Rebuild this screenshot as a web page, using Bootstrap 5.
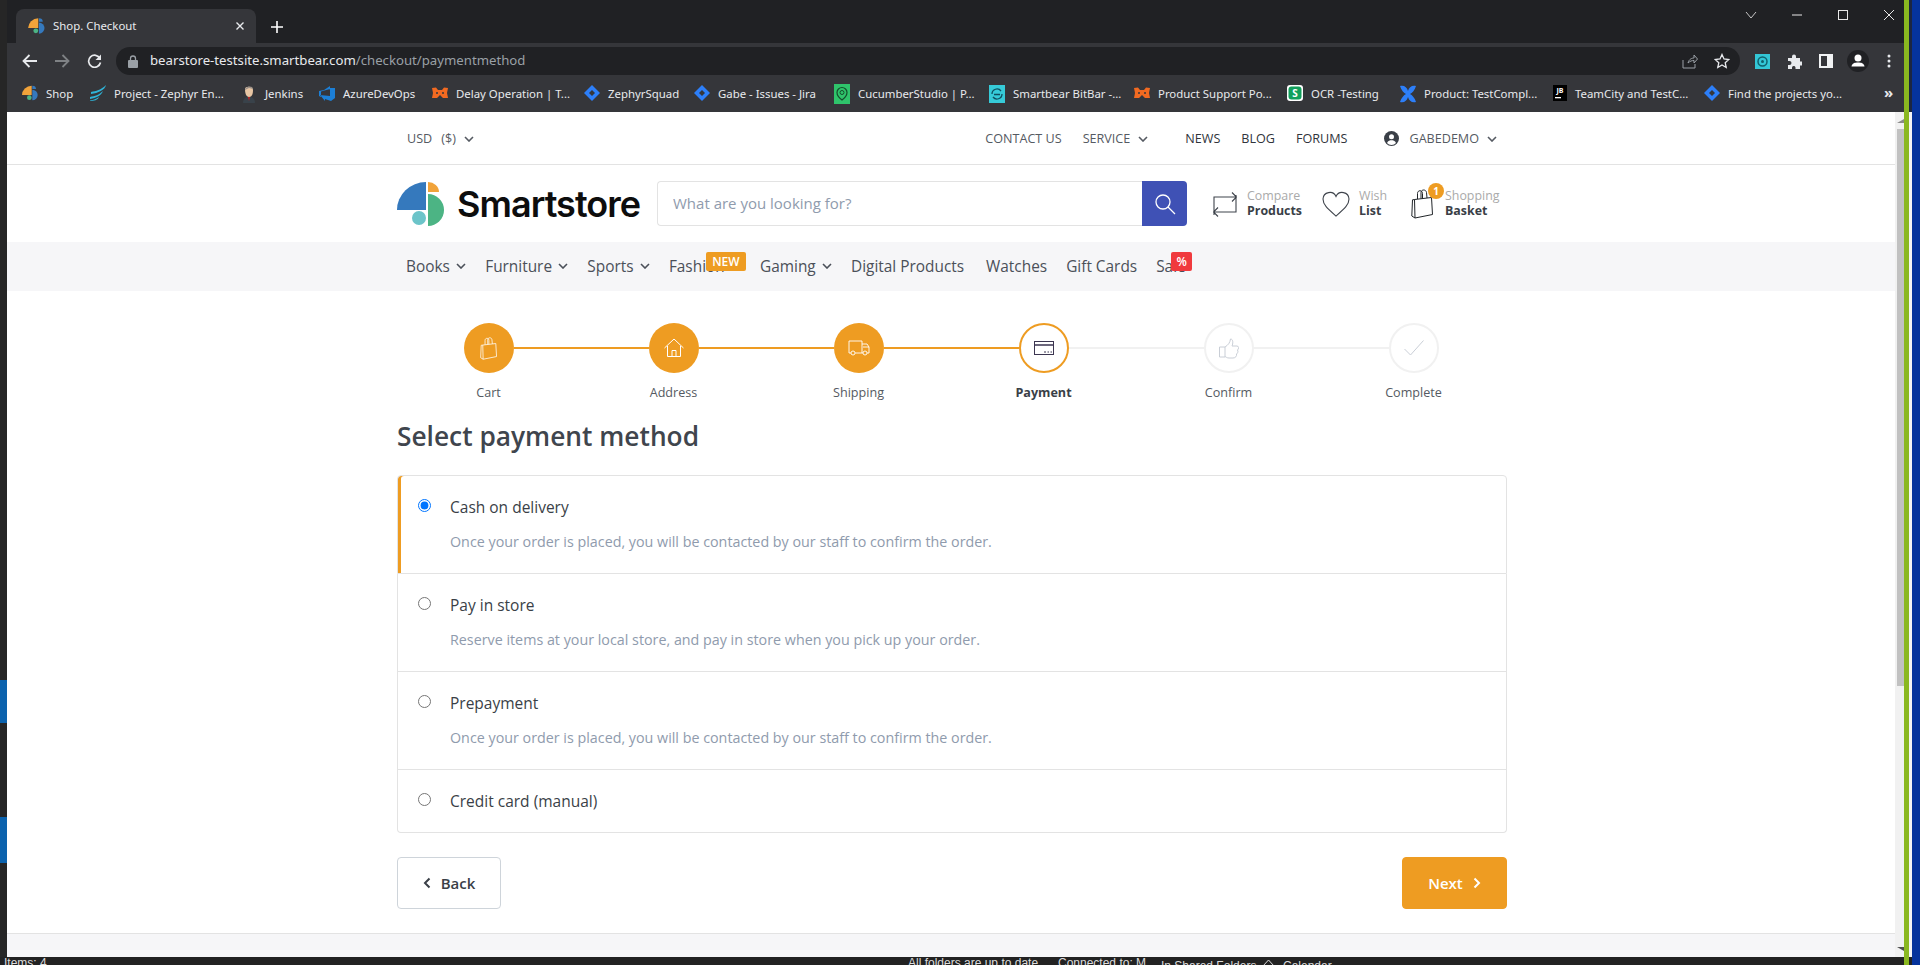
<!DOCTYPE html>
<html lang="en">
<head>
  <meta charset="UTF-8">
  <title>Shop. Checkout</title>
  <meta name="viewport" content="width=device-width, initial-scale=1">
  <link href="https://cdn.jsdelivr.net/npm/bootstrap@5.3.0/dist/css/bootstrap.min.css" rel="stylesheet">
  <script src="https://cdn.jsdelivr.net/npm/bootstrap@5.3.0/dist/js/bootstrap.bundle.min.js"></script>
  <style>
    html, body { height: 965px; overflow: hidden; }
    body {
      font-family: "Open Sans", "Noto Sans", sans-serif;
      font-size: 14px;
      color: #3a3f47;
      background: #05339c;
      display: flex;
      width: 1920px;
    }
    svg { display: block; flex: none; }

    /* desktop around the browser window */
    .desk-main { width: 1904px; flex: none; display: flex; flex-direction: column; }
    .desk-row { height: 957px; display: flex; }
    .desk-left {
      width: 7px; flex: none;
      background: linear-gradient(to bottom, #262626 680px, #0b62ad 680px 723px, #262626 723px 817px, #0b62ad 817px 863px, #262626 863px);
    }
    .desk-status {
      height: 8px; background: #222; color: #ddd; overflow: hidden;
      font-family: "Liberation Sans", sans-serif; font-size: 12px; line-height: 13px;
      display: flex; white-space: nowrap;
    }
    .st-a { margin-left: 4px; width: 904px; }
    .st-b { width: 150px; }
    .st-b2 { width: 103px; }
    .st-c { width: 102px; margin-top: 3px; }
    .st-d { width: 120px; margin-top: 3px; display: flex; gap: 9px; }
    .desk-green { width: 5px; flex: none; background: #8ab820; }
    .desk-strip { width: 3px; flex: none; display: flex; flex-direction: column; }
    .strip-top { height: 112px; background: #1c2640; }
    .strip-mid { flex: 1; background: #f4f4f4; }
    .strip-bot { height: 8px; background: #222; }
    .desk-blue { flex: 1; }

    /* browser chrome */
    .win { flex: 1; display: flex; flex-direction: column; min-width: 0; }
    .tabstrip { height: 43px; background: #202124; display: flex; align-items: flex-end; padding-left: 9px; }
    .tab-item {
      width: 240px; height: 34px; background: #35363a; border-radius: 8px 8px 0 0;
      display: flex; align-items: center; padding-left: 12px; color: #e8eaed;
      font-family: "Noto Sans", sans-serif; font-size: 11.4px;
    }
    .tab-title { margin-left: 8px; flex: 1; }
    .tab-x { margin-right: 12px; }
    .tab-plus { margin: 0 0 10px 15px; }
    .win-ctl { margin-left: auto; display: flex; align-items: center; gap: 34px; height: 30px; align-self: flex-start; padding-right: 9px; }

    .toolbar { height: 32px; background: #35363a; display: flex; padding-left: 7px; }
    .tool-slot { width: 32px; height: 28px; margin-top: 4px; display: flex; align-items: center; justify-content: center; }
    .omni {
      flex: 1; margin: 4px 6px 0; height: 28px; border-radius: 14px; background: #202124;
      display: flex; align-items: center; padding: 0 8px 0 12px; color: #e8eaed;
      font-family: "Noto Sans", sans-serif; font-size: 13.2px;
    }
    .omni-url { margin-left: 12px; flex: 1; }
    .omni-url span { color: #9aa0a6; }
    .omni-act { display: flex; gap: 16px; margin-right: 2px; }
    .tool-end { width: 30px; }

    .bmbar {
      height: 37px; background: #35363a; padding-left: 15px; color: #e8eaed;
      font-family: "Noto Sans", sans-serif; font-size: 11.4px;
      display: grid; align-items: center;
      grid-template-columns: 68px 151px 78px 113px 152px 110px 140px 155px 145px 153px 113px 153px 151px 170px 1fr;
    }
    .bm-item { display: flex; align-items: center; gap: 8px; white-space: nowrap; }
    .bm-more { color: #e8eaed; font-size: 15px; font-weight: 700; line-height: 1; margin-top: -3px; padding-left: 10px; }

    /* page */
    .viewport { flex: 1; display: flex; min-height: 0; }
    .page { flex: 1; background: #fff; display: flex; flex-direction: column; min-width: 0; }
    .scroll-track { width: 9px; flex: none; background: #f1f1f1; display: flex; flex-direction: column; justify-content: space-between; padding-left: 2px; }
    .scroll-up { height: 17px; display: flex; align-items: center; justify-content: flex-end; }
    .scroll-down { height: 17px; display: flex; align-items: center; justify-content: flex-end; margin-top: auto; }
    .scroll-thumb { height: 557px; background: #c1c1c1; }
    .shell { width: 1110px; margin: 0 0 0 390px; }

    .topbar { height: 53px; border-bottom: 1px solid #e3e3e3; font-size: 12.6px; }
    .topbar .shell { height: 100%; display: flex; align-items: center; padding: 2px 0 0 10px; color: #555a62; }
    .cur-gap { margin-left: 9px; }
    .chev { margin-left: 8px; }
    .top-right { margin-left: auto; display: flex; align-items: center; padding-right: 10px; }
    .top-right a { color: inherit; text-decoration: none; }
    .top-strong { color: #30343b !important; }
    .gap-21 { margin-left: 21px; }
    .gap-37 { margin-left: 37px; }
    .gap-10 { margin-left: 10px; }
    .gap-8 { margin-left: 8px; }

    .headrow { height: 77px; }
    .headrow .shell { height: 100%; display: flex; align-items: center; }
    .brand { display: flex; align-items: center; width: 260px; flex: none; }
    .brand-name {
      font-family: "Inter", sans-serif; font-weight: 600; font-size: 36px; letter-spacing: -.95px;
      color: #0d0d0d; margin-left: 12px; line-height: 1;
    }
    .searchbox { width: 530px; height: 45px; display: flex; flex: none; }
    .searchbox .form-control {
      border-radius: 4px 0 0 4px; border: 1px solid #e3e3e3; border-right: 0; font-size: 15px; padding-left: 15px; color: #8f9bad;
    }
    .searchbox .form-control::placeholder { color: #8f9bad; }
    .search-go { width: 45px; flex: none; background: #3f51b5; border-radius: 0 4px 4px 0; display: flex; align-items: center; justify-content: center; }
    .tool-link { display: flex; align-items: center; line-height: 14.5px; font-size: 12.4px; }
    .tool-link small { display: block; font-size: 12.4px; color: #aaa; }
    .tool-link b { display: block; font-weight: 700; color: #3a3f47; }
    .tl-cmp { margin-left: 26px; width: 109px; gap: 10px; }
    .tl-wish { width: 89px; gap: 9px; }
    .tl-bag { gap: 12px; position: relative; }
    .cart-count {
      position: absolute; left: 17px; top: -6px; width: 16px; height: 16px; border-radius: 50%;
      background: #ee9c22; color: #fff; font-size: 10px; font-weight: 700; line-height: 16px; text-align: center;
    }

    .catnav { height: 49px; background: #f6f6f8; }
    .catnav .shell { height: 100%; display: flex; align-items: center; padding-left: 9px; gap: 19px; font-size: 15.4px; font-weight: 500; color: #4b5059; }
    .catnav .chev { margin-left: 6.3px; }
    .cat-item { display: flex; align-items: center; position: relative; white-space: nowrap; }
    .cat-wide { margin-right: 3px; }
    .cat-tag {
      position: absolute; top: -3px; height: 19px; border-radius: 2px; color: #fff; font-size: 12px;
      font-weight: 600; line-height: 19px; text-align: center;
    }
    .tag-new { left: 37px; width: 40px; background: #ee9c22; }
    .tag-sale { left: 15px; width: 21px; background: #f03a3e; }

    .stepper { display: grid; grid-template-columns: repeat(6, 185px); margin: 32px 0 0 -1px; }
    .step-item { text-align: center; }
    .step-head { display: flex; align-items: center; }
    .step-head::before, .step-head::after { content: ""; flex: 1; height: 2px; }
    .ln-l-on::before, .ln-r-on::after { background: #ee9c22; }
    .ln-l-off::before, .ln-r-off::after { background: #f1f1f1; }
    .ln-l-none::before, .ln-r-none::after { background: transparent; }
    .step-dot { width: 50px; height: 50px; border-radius: 50%; display: flex; align-items: center; justify-content: center; }
    .dot-done { background: #ee9c22; }
    .dot-now { border: 2px solid #ee9c22; }
    .dot-off { border: 2px solid #f1f1f1; }
    .step-label { font-size: 12.6px; margin-top: 10px; line-height: 20px; color: #555a62; }
    .step-label-now { font-weight: 700; color: #3a3f47; }

    .page-title { font-family: "Open Sans", sans-serif; font-size: 26.3px; font-weight: 600; color: #40454d; margin: 8px 0 14px; height: 50px; line-height: 50px; }
    .pay-list { border-radius: 4px; }
    .pay-list .list-group-item { border-color: #e3e3e3; padding: 20px 17px 21px 20px; }
    .pay-on { box-shadow: inset 3px 0 0 #ee9c22; }
    .pay-head { display: flex; align-items: center; height: 21px; }
    .pay-head input { margin: 0 19px 2px 0; width: 13px; height: 13px; }
    .pay-name { font-weight: 500; font-size: 15.5px; color: #3a3f47; margin-top: 2px; }
    .pay-desc { margin: 14px 0 0 32px; color: #8f9bad; line-height: 21px; font-size: 14.3px; }

    .act-row { display: flex; justify-content: space-between; margin-top: 24px; }
    .btn-back, .btn-next { height: 52px; display: flex; align-items: center; gap: 10px; font-size: 15px; font-weight: 600; border-radius: 4px; justify-content: center; }
    .btn-back { width: 104px; background: #fff; border: 1px solid #ced4da; color: #3a3f47; }
    .btn-next { width: 105px; background: #ee9c22; border: 1px solid #ee9c22; color: #fff; }
    .foot-strip { flex: 1; margin-top: 24px; background: #f6f6f8; border-top: 1px solid #e3e3e3; }
  </style>
</head>
<body>

<svg width="0" height="0" class="position-absolute">
  <defs>
    <symbol id="logoMark" viewBox="0 0 48 46">
      <path d="M29 1V29H0A29 28 0 0 1 29 1Z" fill="#3579bd"/>
      <path d="M31 1A11 10 0 0 1 42 11H31Z" fill="#f1a33a"/>
      <path d="M31 13A16 16 0 0 1 31 45Z" fill="#4cb484"/>
      <circle cx="22" cy="37" r="7" fill="#6cc4c9"/>
    </symbol>
    <symbol id="favMark" viewBox="0 0 48 46">
      <path d="M29 1V29H0A29 28 0 0 1 29 1Z" fill="#f1a33a"/>
      <path d="M31 1A11 10 0 0 1 42 11H31Z" fill="#3579bd"/>
      <path d="M31 13A16 16 0 0 1 31 45Z" fill="#3579bd"/>
      <circle cx="22" cy="37" r="7" fill="#4cb484"/>
    </symbol>
    <symbol id="bearMask" viewBox="0 0 16 16">
      <path d="M0 3L4 2.500L6 5H10L12 2.500L16 3L15 8L16 13H11L8 10L5 13H0L1 8Z" fill="#f26a21"/>
      <circle cx="5" cy="8" r="1" fill="#35363a"/><circle cx="11" cy="8" r="1" fill="#35363a"/>
    </symbol>
    <symbol id="jiraMark" viewBox="0 0 16 16">
      <path d="M8 0L16 8L8 16L0 8Z" fill="#2d7ff9"/>
      <path d="M8 5L11 8L8 11L5 8Z" fill="#35363a"/>
    </symbol>
    <symbol id="chevDown" viewBox="0 0 10 6">
      <path d="M1 1L5 5L9 1" fill="none" stroke="currentColor" stroke-width="1.6"/>
    </symbol>
    <symbol id="bagLine" viewBox="0 0 22 30">
      <path d="M3.500 10.500L20.500 8.500L21.500 25.500L4 29L.8 27L1.500 10.800L3.500 10.500L4 29M6.500 10V4.500C6.500 .8 11.500 .8 11.500 4.500V9.500M10 9.500V3.800C10 .2 15 0 15.500 3.500L16 9" fill="none" stroke="currentColor" stroke-width="1"/>
    </symbol>
  </defs>
</svg>

<div class="desk-main">
  <div class="desk-row">
    <div class="desk-left"></div>
    <div class="win">

      <div class="tabstrip">
        <div class="tab-item">
          <svg width="17" height="16"><use href="#favMark"/></svg>
          <span class="tab-title">Shop. Checkout</span>
          <svg class="tab-x" width="8" height="8" viewBox="0 0 8 8"><path d="M.5.5L7.5 7.5M7.5.5L.5 7.5" stroke="#e8eaed" stroke-width="1.4"/></svg>
        </div>
        <svg class="tab-plus" width="12" height="12" viewBox="0 0 12 12"><path d="M6 0V12M0 6H12" stroke="#fff" stroke-width="1.6"/></svg>
        <div class="win-ctl">
          <svg width="12" height="12" viewBox="0 0 12 12"><path d="M1 3L6 9L11 3" fill="none" stroke="#c8c8c8"/></svg>
          <svg width="12" height="12" viewBox="0 0 12 12"><path d="M1 6H11" stroke="#e8e8e8"/></svg>
          <svg width="12" height="12" viewBox="0 0 12 12"><rect x="1.5" y="1.5" width="9" height="9" fill="none" stroke="#e8e8e8"/></svg>
          <svg width="12" height="12" viewBox="0 0 12 12"><path d="M1 1L11 11M11 1L1 11" stroke="#e8e8e8"/></svg>
        </div>
      </div>

      <div class="toolbar">
        <div class="tool-slot"><svg width="16" height="14" viewBox="0 0 16 14"><path d="M15 7H2M7.5 1L1.5 7L7.5 13" fill="none" stroke="#e8eaed" stroke-width="1.8"/></svg></div>
        <div class="tool-slot"><svg width="16" height="14" viewBox="0 0 16 14"><path d="M1 7H14M8.500 1L14.500 7L8.500 13" fill="none" stroke="#7f8285" stroke-width="1.8"/></svg></div>
        <div class="tool-slot"><svg width="15" height="15" viewBox="0 0 15 15"><path d="M13 4.500A6 6 0 1 0 13.500 8.500" fill="none" stroke="#e8eaed" stroke-width="1.7"/><path d="M14 0.500V6H8.500Z" fill="#e8eaed"/></svg></div>
        <div class="omni">
          <svg width="10" height="13" viewBox="0 0 10 13"><rect y="5" width="10" height="8" rx="1" fill="#9aa0a6"/><path d="M2.500 5V3.500a2.500 2.500 0 0 1 5 0V5" fill="none" stroke="#9aa0a6" stroke-width="1.300"/></svg>
          <div class="omni-url">bearstore-testsite.smartbear.com<span>/checkout/paymentmethod</span></div>
          <div class="omni-act">
            <svg width="16" height="16" viewBox="0 0 16 16"><path d="M1 7V15H13V11M6 10C7 6 10 5 12 5V2L15.500 6L12 10V7.500C10 7.500 8 8 6 10Z" fill="none" stroke="#9aa0a6"/></svg>
            <svg width="16" height="16" viewBox="0 0 16 16"><path d="M8 1.500L10 6L14.800 6.500L11.200 9.700L12.200 14.500L8 12L3.800 14.500L4.800 9.700L1.200 6.500L6 6Z" fill="none" stroke="#e8eaed" stroke-width="1.300"/></svg>
          </div>
        </div>
        <div class="tool-slot"><svg width="15" height="15" viewBox="0 0 15 15"><rect width="15" height="15" fill="#33c7d6"/><circle cx="7.500" cy="7.500" r="4.500" fill="none" stroke="#10616d" stroke-width="1.500"/><circle cx="7.500" cy="7.500" r="1.500" fill="#10616d"/></svg></div>
        <div class="tool-slot"><svg width="15" height="15" viewBox="0 0 15 15"><path d="M1 4H5V2.500a2 2 0 0 1 4 0V4H13V7.500H14.500a2 2 0 0 1 0 4H13V15H8.500V13.500a1.800 1.800 0 0 0-3.500 0V15H1V11H2.500a2 2 0 0 0 0-4H1Z" fill="#e8eaed"/></svg></div>
        <div class="tool-slot"><svg width="14" height="14" viewBox="0 0 14 14"><rect x="1" y="1" width="12" height="12" fill="none" stroke="#f1f3f4" stroke-width="2"/><rect x="8" y="1" width="5" height="12" fill="#f1f3f4"/></svg></div>
        <div class="tool-slot"><svg width="22" height="22" viewBox="0 0 22 22"><circle cx="11" cy="11" r="11" fill="#202124"/><circle cx="11" cy="8" r="3.500" fill="#fff"/><path d="M4.500 16.500C5 13 8 12.500 11 12.500S17 13 17.500 16.500Z" fill="#fff"/></svg></div>
        <div class="tool-slot tool-end"><svg width="4" height="14" viewBox="0 0 4 14"><circle cx="2" cy="2" r="1.500" fill="#e8eaed"/><circle cx="2" cy="7" r="1.500" fill="#e8eaed"/><circle cx="2" cy="12" r="1.500" fill="#e8eaed"/></svg></div>
      </div>

      <div class="bmbar">
        <div class="bm-item"><svg width="16" height="16"><use href="#favMark"/></svg>Shop</div>
        <div class="bm-item"><svg width="16" height="16" viewBox="0 0 16 16"><path d="M1 7C6 6 11 5 16 0C15 5 8 8 1 9ZM0 12C5 11 9 10 13 6C11 11 6 13 0 14ZM0 15.500C4 15 6 14 9 12C8 15 4 16 0 16Z" fill="#2fb4d8"/></svg>Project - Zephyr En...</div>
        <div class="bm-item"><svg width="16" height="18" viewBox="0 0 16 18"><path d="M4 4C4 1 12 1 12 5C12 9 11 12 8 12C5 12 4 8 4 4Z" fill="#e8c6a4"/><path d="M4 5C4 1 12 0 12 4L8 3Z" fill="#9a9088"/><path d="M2 18C2 13 5 12 8 12C11 12 14 13 14 18Z" fill="#39424a"/><path d="M7 12L9 12L8 16Z" fill="#c22"/></svg>Jenkins</div>
        <div class="bm-item"><svg width="16" height="16" viewBox="0 0 16 16"><path d="M16 3V13L12 16L6 14V16L1 10L11 11V3L16 3ZM11 1L5 5L0 6V11L2 12V6.500L11 4Z" fill="#1c7fd6"/></svg>AzureDevOps</div>
        <div class="bm-item"><svg width="16" height="16"><use href="#bearMask"/></svg>Delay Operation | T...</div>
        <div class="bm-item"><svg width="16" height="16"><use href="#jiraMark"/></svg>ZephyrSquad</div>
        <div class="bm-item"><svg width="16" height="16"><use href="#jiraMark"/></svg>Gabe - Issues - Jira</div>
        <div class="bm-item"><svg width="16" height="20" viewBox="0 0 16 20"><rect width="16" height="20" fill="#2fc46b"/><path d="M8 16C4 13 3 11 3 8.500a5 5 0 0 1 10 0C13 11 12 13 8 16Z" fill="none" stroke="#144e2c" stroke-width="1.200"/><circle cx="8" cy="8.500" r="2" fill="none" stroke="#144e2c"/></svg>CucumberStudio | P...</div>
        <div class="bm-item"><svg width="16" height="18" viewBox="0 0 16 18"><rect width="16" height="18" fill="#36cbd8"/><path d="M3 9a5 5 0 0 1 9-3M13 9a5 5 0 0 1-9 3M5 9.500H11" fill="none" stroke="#0f4f5f" stroke-width="1.300"/></svg>Smartbear BitBar -...</div>
        <div class="bm-item"><svg width="16" height="16"><use href="#bearMask"/></svg>Product Support Po...</div>
        <div class="bm-item"><svg width="16" height="16" viewBox="0 0 16 16"><rect width="16" height="16" rx="3" fill="#fff"/><rect x="1.500" y="1.500" width="13" height="13" rx="3" fill="#12a05c"/><text x="8" y="12" font-size="10" font-weight="700" fill="#fff" text-anchor="middle">S</text></svg>OCR -Testing</div>
        <div class="bm-item"><svg width="16" height="18" viewBox="0 0 16 18"><path d="M0 1C4 0 7 2 8 6C9 2 12 0 16 1C15 5 12 8 10 9C12 10 15 13 16 17C12 18 9 16 8 12C7 16 4 18 0 17C1 13 4 10 6 9C4 8 1 5 0 1Z" fill="#2d7ff9"/></svg>Product: TestCompl...</div>
        <div class="bm-item"><svg width="14" height="16" viewBox="0 0 14 16"><rect width="14" height="16" fill="#000"/><text x="7" y="8" font-size="7" font-weight="700" fill="#fff" text-anchor="middle">JB</text><rect x="2" y="12" width="6" height="1.300" fill="#fff"/></svg>TeamCity and TestC...</div>
        <div class="bm-item"><svg width="16" height="16"><use href="#jiraMark"/></svg>Find the projects yo...</div>
        <div class="bm-more">&raquo;</div>
      </div>

      <div class="viewport">
        <div class="page">

          <div class="topbar">
            <div class="shell">
              <span>USD</span><span class="cur-gap">($)</span>
              <svg class="chev" width="10" height="6"><use href="#chevDown"/></svg>
              <div class="top-right">
                <a href="#">CONTACT US</a>
                <a href="#" class="gap-21">SERVICE</a>
                <svg class="chev" width="10" height="6"><use href="#chevDown"/></svg>
                <a href="#" class="top-strong gap-37">NEWS</a>
                <a href="#" class="top-strong gap-21">BLOG</a>
                <a href="#" class="top-strong gap-21">FORUMS</a>
                <svg class="gap-37" width="15" height="15" viewBox="0 0 15 15"><circle cx="7.500" cy="7.500" r="7.500" fill="#3a3f47"/><circle cx="7.500" cy="5.800" r="2.500" fill="#fff"/><path d="M3 12C4 9.500 6 9.300 7.500 9.300S11 9.500 12 12A6 6 0 0 1 3 12Z" fill="#fff"/></svg>
                <span class="gap-10">GABEDEMO</span>
                <svg class="gap-8" width="10" height="6"><use href="#chevDown"/></svg>
              </div>
            </div>
          </div>

          <div class="headrow">
            <div class="shell">
              <div class="brand">
                <svg width="48" height="46"><use href="#logoMark"/></svg>
                <span class="brand-name">Smartstore</span>
              </div>
              <div class="searchbox">
                <input class="form-control" type="text" placeholder="What are you looking for?">
                <div class="search-go"><svg width="22" height="22" viewBox="0 0 22 22"><circle cx="9" cy="9" r="7" fill="none" stroke="#fff" stroke-width="1.300"/><path d="M14 14L21 21" stroke="#fff" stroke-width="1.300"/></svg></div>
              </div>
              <div class="tool-link tl-cmp">
                <svg width="24" height="30" viewBox="0 0 24 30"><path d="M1 26V8H23M19 3.500L23.500 8L19 12.500M23 6V23H1M5 18.500L.5 23L5 27.500" fill="none" stroke="#3f444c" stroke-width="1.100"/></svg>
                <div><small>Compare</small><b>Products</b></div>
              </div>
              <div class="tool-link tl-wish">
                <svg width="28" height="26" viewBox="0 0 28 26"><path d="M14 25C6 18 1 14 1 8A6.800 6.800 0 0 1 14 5.500A6.800 6.800 0 0 1 27 8C27 14 22 18 14 25Z" fill="none" stroke="#3f444c" stroke-width="1.100"/></svg>
                <div><small>Wish</small><b>List</b></div>
              </div>
              <div class="tool-link tl-bag">
                <svg width="22" height="30" class="text-dark"><use href="#bagLine"/></svg>
                <span class="cart-count">1</span>
                <div><small>Shopping</small><b>Basket</b></div>
              </div>
            </div>
          </div>

          <div class="catnav">
            <div class="shell">
              <div class="cat-item">Books<svg class="chev" width="10" height="6"><use href="#chevDown"/></svg></div>
              <div class="cat-item">Furniture<svg class="chev" width="10" height="6"><use href="#chevDown"/></svg></div>
              <div class="cat-item">Sports<svg class="chev" width="10" height="6"><use href="#chevDown"/></svg></div>
              <div class="cat-item">Fashion<svg class="chev" width="10" height="6"><use href="#chevDown"/></svg><span class="cat-tag tag-new">NEW</span></div>
              <div class="cat-item">Gaming<svg class="chev" width="10" height="6"><use href="#chevDown"/></svg></div>
              <div class="cat-item cat-wide">Digital Products</div>
              <div class="cat-item">Watches</div>
              <div class="cat-item">Gift Cards</div>
              <div class="cat-item">Sale<span class="cat-tag tag-sale">%</span></div>
            </div>
          </div>

          <div class="shell">
            <div class="stepper">
              <div class="step-item">
                <div class="step-head ln-l-none ln-r-on"><div class="step-dot dot-done"><svg width="17" height="23" class="text-white"><use href="#bagLine"/></svg></div></div>
                <div class="step-label">Cart</div>
              </div>
              <div class="step-item">
                <div class="step-head ln-l-on ln-r-on"><div class="step-dot dot-done"><svg width="20" height="20" viewBox="0 0 20 20"><path d="M0.500 10L10 1L19.500 10M3.500 8V18.500H16.500V8M8 18.500V12.500H12V18.500" fill="none" stroke="#fff" stroke-width="1"/></svg></div></div>
                <div class="step-label">Address</div>
              </div>
              <div class="step-item">
                <div class="step-head ln-l-on ln-r-on"><div class="step-dot dot-done"><svg width="22" height="16" viewBox="0 0 22 16"><path d="M3 13H1V1H14V13H7M14 4H19L21 7V13H19M14 13H15M15 7H21" fill="none" stroke="#fff" stroke-width=".9"/><circle cx="5" cy="13" r="2" fill="none" stroke="#fff" stroke-width=".9"/><circle cx="17" cy="13" r="2" fill="none" stroke="#fff" stroke-width=".9"/></svg></div></div>
                <div class="step-label">Shipping</div>
              </div>
              <div class="step-item">
                <div class="step-head ln-l-on ln-r-off"><div class="step-dot dot-now"><svg width="20" height="14" viewBox="0 0 20 14"><rect x=".5" y=".5" width="19" height="13" fill="none" stroke="#3b3550"/><path d="M.5 4H19.500" stroke="#3b3550" stroke-width="1.500"/><path d="M10 11H12M13.500 11H15M16.500 11H18" stroke="#3b3550"/></svg></div></div>
                <div class="step-label step-label-now">Payment</div>
              </div>
              <div class="step-item">
                <div class="step-head ln-l-off ln-r-off"><div class="step-dot dot-off"><svg width="20" height="21" viewBox="0 0 20 21"><path d="M.5 9H6V19H.5ZM6 9C9 7 11 5 11.500 1C14.500 1 14 6 13 8H18C20 8 20 11 18.500 12C19.500 14 18.500 15 17.500 16C18 18 16.500 20 14 20H10C8 20 7 19 6 18.500" fill="none" stroke="#c9ced6" stroke-width="1"/></svg></div></div>
                <div class="step-label">Confirm</div>
              </div>
              <div class="step-item">
                <div class="step-head ln-l-off ln-r-none"><div class="step-dot dot-off"><svg width="20" height="16" viewBox="0 0 20 16"><path d="M.5 9L6.500 15L19.500 .5" fill="none" stroke="#c9ced6" stroke-width="1"/></svg></div></div>
                <div class="step-label">Complete</div>
              </div>
            </div>

            <h1 class="page-title">Select payment method</h1>

            <div class="list-group pay-list">
              <label class="list-group-item pay-on">
                <div class="pay-head"><input type="radio" name="pm" checked><span class="pay-name">Cash on delivery</span></div>
                <div class="pay-desc">Once your order is placed, you will be contacted by our staff to confirm the order.</div>
              </label>
              <label class="list-group-item">
                <div class="pay-head"><input type="radio" name="pm"><span class="pay-name">Pay in store</span></div>
                <div class="pay-desc">Reserve items at your local store, and pay in store when you pick up your order.</div>
              </label>
              <label class="list-group-item">
                <div class="pay-head"><input type="radio" name="pm"><span class="pay-name">Prepayment</span></div>
                <div class="pay-desc">Once your order is placed, you will be contacted by our staff to confirm the order.</div>
              </label>
              <label class="list-group-item">
                <div class="pay-head"><input type="radio" name="pm"><span class="pay-name">Credit card (manual)</span></div>
              </label>
            </div>

            <div class="act-row">
              <button type="button" class="btn btn-back"><svg width="8" height="12" viewBox="0 0 8 12"><path d="M6.500 1.500L2 6L6.500 10.500" fill="none" stroke="#3a3f47" stroke-width="2"/></svg>Back</button>
              <button type="button" class="btn btn-next">Next<svg width="8" height="12" viewBox="0 0 8 12"><path d="M1.500 1.500L6 6L1.500 10.500" fill="none" stroke="#fff" stroke-width="2"/></svg></button>
            </div>
          </div>

          <div class="foot-strip"></div>
        </div>
        <div class="scroll-track">
          <div class="scroll-up"><svg width="7" height="4" viewBox="0 0 7 4"><path d="M0 4L7 4L7 0Z" fill="#8a8a8a"/></svg></div>
          <div class="scroll-thumb"></div>
          <div class="scroll-down"><svg width="7" height="4" viewBox="0 0 7 4"><path d="M0 0H7V4Z" fill="#505050"/></svg></div>
        </div>
      </div>

    </div>
  </div>
  <div class="desk-status">
    <span class="st-a">Items: 4</span>
    <span class="st-b">All folders are up to date.</span>
    <span class="st-b2">Connected to: M</span>
    <span class="st-c">In Shared Folders</span>
    <span class="st-d"><svg width="11" height="11" viewBox="0 0 11 11"><path d="M5.500 0L11 6L5.500 11L0 6Z" fill="none" stroke="#ddd"/></svg>Calendar</span>
  </div>
</div>
<div class="desk-green"></div>
<div class="desk-strip">
  <div class="strip-top"></div>
  <div class="strip-mid"></div>
  <div class="strip-bot"></div>
</div>
<div class="desk-blue"></div>

</body>
</html>
